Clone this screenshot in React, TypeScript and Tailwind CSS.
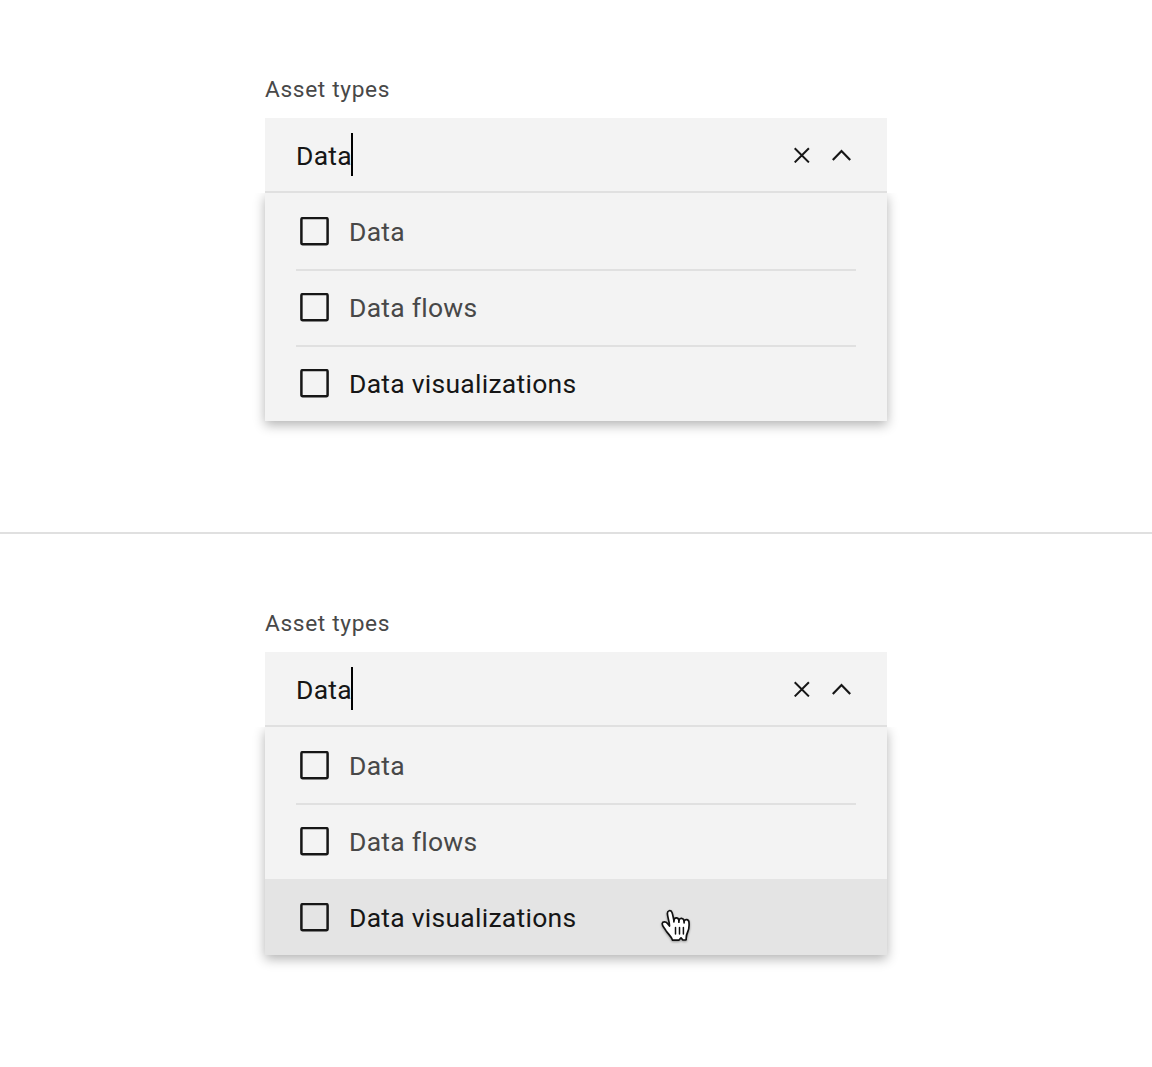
function CloseIcon() {
  return (
    <svg width="16" height="16" viewBox="0 0 16 16" fill="none" stroke="#161616" strokeWidth="2">
      <path d="M.7 1.2 14.9 15.4M14.9 1.2 .7 15.4" />
    </svg>
  );
}

function ChevronUp() {
  return (
    <svg width="20" height="12" viewBox="0 0 20 12" fill="none" stroke="#161616" strokeWidth="2.2">
      <path d="M.8 11 9.5 2.1 18.2 11" />
    </svg>
  );
}

function Checkbox() {
  return (
    <svg className="shrink-0" width="29" height="29" viewBox="0 0 29 29" fill="none" stroke="#161616" strokeWidth="2.5">
      <rect x="1.4" y="1.1" width="26.2" height="26.1" rx="1.4" />
    </svg>
  );
}

function HandCursor() {
  return (
    <svg
      className="absolute left-[395px] top-[29px] drop-shadow-[0_1px_1px_rgba(0,0,0,0.35)]"
      width="32"
      height="36"
      viewBox="0 0 32 36"
      fill="#fff"
      stroke="#111"
      strokeWidth="1.7"
      strokeLinejoin="round"
      strokeLinecap="round"
    >
      <path d="M12.6 32.2C11.5 28.4 7.7 25.6 5.8 22.3C4.3 19.5 2 18 2.2 15.6C2.6 13.2 6 13.4 7.5 15.5L9.5 18C9.7 14.5 7.6 9.5 7.4 5.8C7.2 2.3 10.8 1.7 12 4.5C13 7 13.2 10 13.9 12.3C14.3 9.3 18.2 9 18.9 12.3C19.8 9.4 23.5 9.8 24.1 13C25.3 10.9 28.9 11.1 29 14.5C29.3 18 29 21.6 27.5 24.5C26 27.4 26.3 29 26.1 31.8L22.8 32L21 29.8L18.8 32.2Z" />
      <path d="M13.9 12.3V13.8M18.9 12.3V14.2M24.1 13V14.8" />
      <path d="M15.5 19.5V26M19.5 19.5V26M23.4 19.5V26" strokeWidth="1.5" />
    </svg>
  );
}

function Option({ label, className = "", textClass = "text-[#484848]", divider = false, cursor = false }: {
  label: string;
  className?: string;
  textClass?: string;
  divider?: boolean;
  cursor?: boolean;
}) {
  return (
    <div className={`relative h-[76px] px-[31px] ${className}`}>
      <div className={`flex h-full items-center gap-5 pl-1 ${divider ? "border-t-2 border-[#e0e0e0] pb-0.5" : ""}`}>
        <Checkbox />
        <span className={`whitespace-nowrap pt-0.5 text-[26.5px] leading-9 tracking-[0.26px] ${textClass}`}>{label}</span>
      </div>
      {cursor && <HandCursor />}
    </div>
  );
}

function AssetTypes({ hovered = false }: { hovered?: boolean }) {
  return (
    <div className="ml-[265px] w-[622px] pt-[75px]">
      <div className="h-[43px] text-[22.7px] leading-[30px] tracking-[0.65px] text-[#484848]">Asset types</div>
      <div className="flex h-[75px] items-center border-b-2 border-[#e0e0e0] bg-[#f3f3f3] pl-[31px] pr-[35px]">
        <span className="pt-0.5 text-[26.5px] leading-9 tracking-[0.26px] text-[#161616]">Data</span>
        <span className="-ml-px h-[43px] w-0.5 bg-black" />
        <span className="ml-auto flex items-center gap-[22px]">
          <CloseIcon />
          <ChevronUp />
        </span>
      </div>
      <div className="h-[228px] bg-[#f3f3f3] shadow-[0_4px_11px_rgba(0,0,0,0.3)] [clip-path:inset(0_-20px_-24px_-20px)]">
        <Option label="Data" />
        <Option label="Data flows" divider />
        <Option
          label="Data visualizations"
          textClass="text-[#161616]"
          className={hovered ? "bg-[#e4e4e4]" : ""}
          divider={!hovered}
          cursor={hovered}
        />
      </div>
    </div>
  );
}

export default function App() {
  return (
    <main className="h-[1067px] w-[1152px] overflow-hidden bg-white font-['Roboto',sans-serif]">
      <section className="h-[534px] border-b-2 border-[#e0e0e0]">
        <AssetTypes />
      </section>
      <section className="h-[533px]">
        <AssetTypes hovered />
      </section>
    </main>
  );
}
